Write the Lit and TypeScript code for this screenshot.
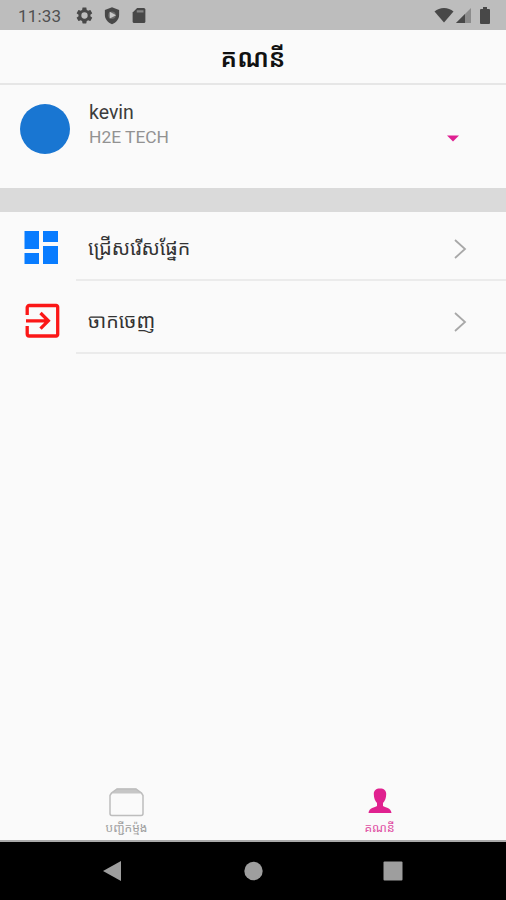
import { LitElement, html, css, svg } from "lit";
import { customElement, property } from "lit/decorators.js";

const chevron = svg`<svg class="chevron" width="14" height="20" viewBox="0 0 14 20"><path d="M2 1 12 10 2 19" fill="none" stroke="#a8a8a8" stroke-width="1.800"/></svg>`;

@customElement("status-bar")
class StatusBar extends LitElement {
  static styles = css`
    :host { display: flex; height: 30px; flex: none; align-items: center; background: #bdbdbd; padding: 0 15px 0 18px; box-sizing: border-box; color: #505050; font-family: Roboto, sans-serif; }
    .time { width: 57px; font-size: 17px; letter-spacing: .2px; padding-top: 1px; }
    svg { display: block; fill: #484848; }
    .left { display: flex; gap: 9px; align-items: center; }
    .right { display: flex; margin-left: auto; align-items: center; }
    .signal { margin: 0 8px 0 2px; }
  `;
  render() {
    return html`
      <span class="time">11:33</span>
      <div class="left">
        <svg width="19" height="19" viewBox="0 0 24 24"><path d="M19.4 13c.1-.3.1-.7.1-1s0-.7-.1-1l2.1-1.600c.2-.2.300-.4.100-.7l-2-3.400c-.1-.2-.4-.3-.6-.2l-2.500 1c-.5-.4-1.100-.7-1.700-1L14.400 2.400c0-.2-.2-.4-.5-.4h-4c-.2 0-.4.200-.5.400L9 5.100c-.6.300-1.200.600-1.700 1l-2.500-1c-.2-.1-.5 0-.6.200l-2 3.400c-.1.300-.1.500.100.700L4.500 11c0 .3-.1.700-.1 1s0 .7.1 1l-2.200 1.600c-.2.200-.2.400-.1.700l2 3.400c.1.200.4.300.6.200l2.500-1c.5.400 1.100.7 1.700 1l.4 2.700c.1.200.3.400.5.400h4c.3 0 .5-.2.500-.4l.4-2.700c.6-.3 1.200-.6 1.700-1l2.500 1c.2.100.5 0 .6-.2l2-3.400c.1-.2.100-.5-.1-.7zM12 16a4 4 0 1 1 0-8 4 4 0 0 1 0 8z"/></svg>
        <svg width="18" height="19" viewBox="0 0 24 24"><path d="M12 1 2.500 4.500V11c0 6 4 10.500 9.500 12.500 5.500-2 9.500-6.500 9.500-12.500V4.500z"/><circle cx="12" cy="11.500" r="5" fill="#6c6c6c"/><path d="m9 7 8.500 4.500L9 16z" fill="#c8c8c8"/></svg>
        <svg width="18" height="19" viewBox="0 0 24 24"><path d="M9.500 2 3.500 8v12a2 2 0 0 0 2 2h13a2 2 0 0 0 2-2V4a2 2 0 0 0-2-2z"/><path d="M9 5h9v3H9z" fill="#858585"/></svg>
      </div>
      <div class="right">
        <svg width="20" height="16" viewBox="0 0 20 16"><path d="M10 15.500.5 4.500C5.500-.3 14.500-.3 19.500 4.500z"/></svg>
        <svg class="signal" width="15" height="15" viewBox="0 0 15 15"><path d="M15 0v15H0z" fill="#8c8c8c"/><path d="M9 6v9H0z"/></svg>
        <svg width="12" height="17" viewBox="0 0 12 17"><path d="M4 0h4v2h2a1 1 0 0 1 1 1v13a1 1 0 0 1-1 1H2a1 1 0 0 1-1-1V3a1 1 0 0 1 1-1h2z"/></svg>
      </div>`;
  }
}

@customElement("menu-row")
class MenuRow extends LitElement {
  @property() label = "";
  @property() icon = "";
  static styles = css`
    :host { display: flex; box-sizing: border-box; height: 73px; flex: none; }
    .icon { width: 76px; flex: none; display: flex; align-items: center; box-sizing: border-box; padding: var(--icon-drop, 0) 0 0 23px; }
    .body { flex: 1; display: flex; align-items: center; padding: var(--text-drop, 0) 39px 0 12px; border-bottom: 2px solid #ebebeb; }
    .label { flex: 1; font: 19.700px/30px Roboto, "Noto Sans Khmer", "Khmer OS", sans-serif; color: #333; white-space: nowrap; }
    svg { display: block; }
  `;
  render() {
    const art = this.icon === "grid"
      ? svg`<svg width="38" height="36" viewBox="0 0 38 36"><path fill="#087cff" d="M1.500 1H16v18H1.500zM20 1h15v11H20zM1.500 23H16v11H1.500zM20 16h15v18H20z"/></svg>`
      : svg`<svg width="38" height="36" viewBox="0 0 38 36"><g fill="none" stroke="#fb1717" stroke-width="3.300"><path d="M4.200 12V4.500a2 2 0 0 1 2-2h27a1.500 1.500 0 0 1 1.500 1.500v27.500a1.500 1.500 0 0 1-1.500 1.500h-27a2 2 0 0 1-2-2V23"/><path d="M3 17.800h22M17.500 10l7.800 7.800-7.800 7.800"/></g></svg>`;
    return html`<div class="icon">${art}</div><div class="body"><span class="label">${this.label}</span>${chevron}</div>`;
  }
}

@customElement("app-root")
class AppRoot extends LitElement {
  static styles = css`
    :host { display: flex; flex-direction: column; width: 506px; height: 900px; background: #fafafa; overflow: hidden; font-family: Roboto, "Noto Sans Khmer", "Khmer OS", sans-serif; }
    svg { display: block; }
    header { height: 55px; flex: none; box-sizing: border-box; padding-top: 4px; border-bottom: 2px solid #e6e6e6; display: flex; align-items: center; justify-content: center; font-size: 25px; font-weight: 600; color: #111; line-height: 35px; }
    .profile { height: 103px; flex: none; display: flex; box-sizing: border-box; padding: 19px 47px 0 20px; }
    .avatar { width: 50px; height: 50px; border-radius: 50%; background: #1976d2; }
    .who { flex: 1; margin-left: 19px; }
    .name { font-size: 19.500px; line-height: 25px; margin-top: -4px; color: #3c3c3c; }
    .org { font-size: 17.400px; line-height: 24px; color: #929292; }
    .caret { margin-top: 31px; }
    .band { height: 24px; flex: none; background: #dadada; }
    .rows { flex: 1; }
    menu-row:first-child { height: 69px; --icon-drop: 3px; --text-drop: 6px; }
    menu-row:last-child { --icon-drop: 7px; --text-drop: 11px; }
    nav { height: 66px; flex: none; display: flex; border-bottom: 2px solid #aaa; }
    .tab { flex: 1; display: flex; flex-direction: column; align-items: center; box-sizing: border-box; padding-top: 14px; color: #a0a0a0; font-size: 12px; line-height: 20px; gap: 1px; }
    .active { color: #df4fa3; }
    .system { height: 58px; flex: none; background: #000; display: flex; align-items: center; justify-content: space-between; box-sizing: border-box; padding: 0 103px 0 102px; }
  `;
  render() {
    return html`
      <status-bar></status-bar>
      <header>គណនី</header>
      <section class="profile">
        <div class="avatar"></div>
        <div class="who"><div class="name">kevin</div><div class="org">H2E TECH</div></div>
        <svg class="caret" width="12" height="7" viewBox="0 0 12 7"><path d="M0 .5h12L6 6.500z" fill="#df1f91"/></svg>
      </section>
      <div class="band"></div>
      <div class="rows">
        <menu-row icon="grid" label="ជ្រើសរើសផ្នែក"></menu-row>
        <menu-row icon="exit" label="ចាកចេញ"></menu-row>
      </div>
      <nav>
        <div class="tab">
          <svg width="35" height="29" viewBox="0 0 35 29"><path d="M2 5.500 8 .5h19l6 5z" fill="#c6c6c6"/><path d="M1 7.500 2.500 5 8 1h19l5.500 4L34 7.500V25.500a2 2 0 0 1-2 2H3a2 2 0 0 1-2-2z" fill="none" stroke="#bdbdbd" stroke-width="1.500"/></svg>
          <span>បញ្ជីកម្ម៉ង</span>
        </div>
        <div class="tab active">
          <svg width="24" height="29" viewBox="0 0 24 29"><path d="M12 .5C8 .5 5.800 2.500 5.800 6c0 4 1.200 7 3.200 9v3C7 19.500 1 19.500.5 25h23c-.5-5.500-6.500-5.500-8.500-7v-3c2-2 3.200-5 3.200-9 0-3.500-2.200-5.500-6.200-5.500z" fill="#e0218f"/></svg>
          <span>គណនី</span>
        </div>
      </nav>
      <div class="system">
        <svg width="20" height="22" viewBox="0 0 20 22"><path d="M19 1v20L1 11z" fill="#9e9e9e"/></svg>
        <svg width="20" height="20" viewBox="0 0 20 20"><circle cx="10.500" cy="10" r="9.200" fill="#9e9e9e"/></svg>
        <svg width="20" height="20" viewBox="0 0 20 20"><rect x=".5" y=".5" width="19" height="19" rx="1" fill="#9e9e9e"/></svg>
      </div>`;
  }
}
